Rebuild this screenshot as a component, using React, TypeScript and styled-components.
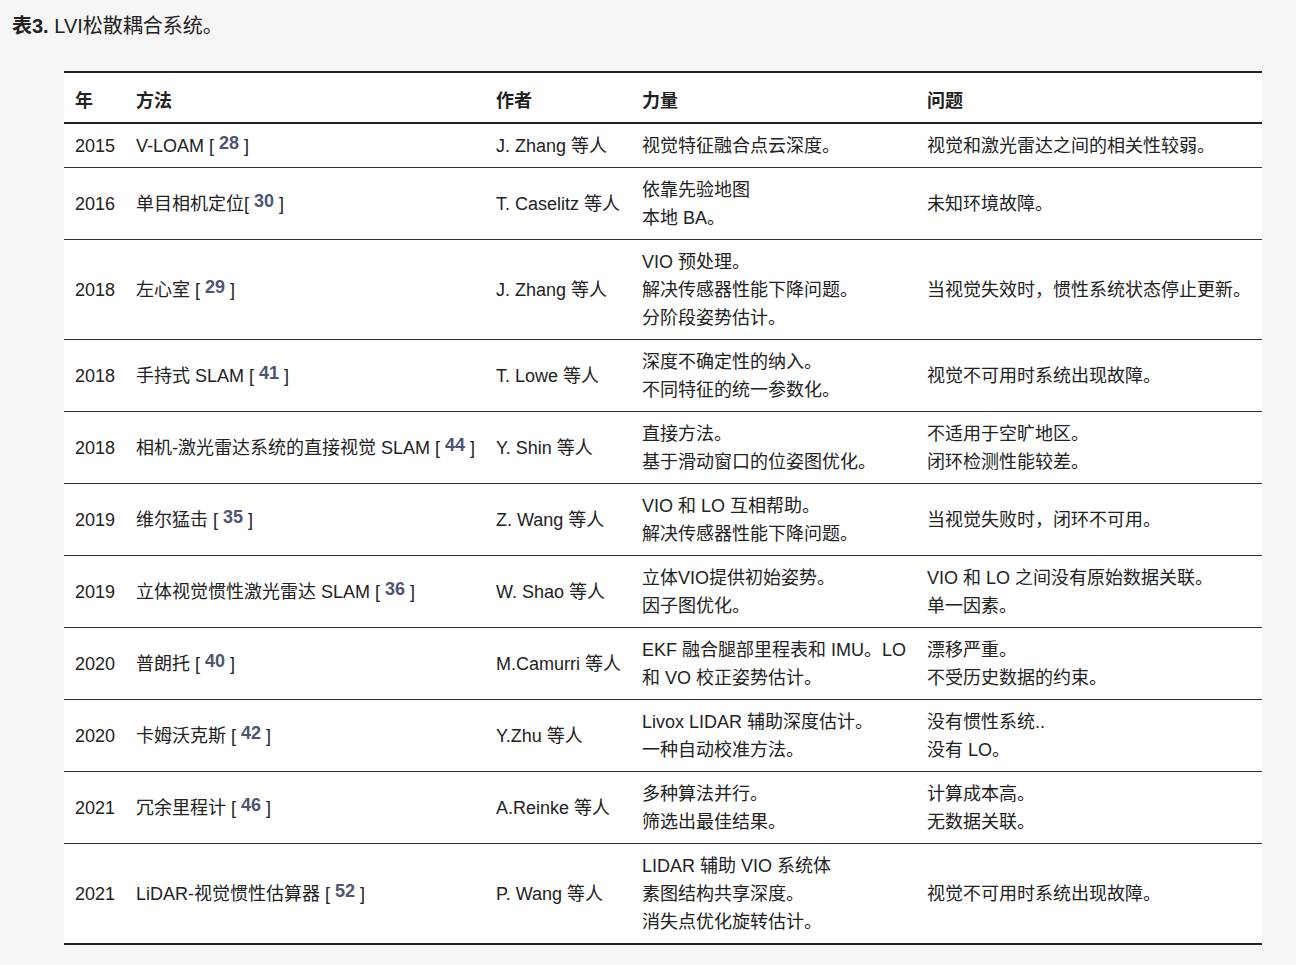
import React from "react";
import styled, { createGlobalStyle } from "styled-components";

const Global = createGlobalStyle`
  body {
    margin: 0;
    background: #f5f5f5;
    font-family: "Liberation Sans", "Noto Sans CJK SC", sans-serif;
    color: #222;
  }
`;

const Page = styled.div`
  padding: 12px 34px 16px 12px;
`;

const Caption = styled.div`
  font-size: 20px;
  line-height: 28px;
  margin-bottom: 31px;
  b {
    font-weight: 700;
  }
`;

const Table = styled.table`
  margin-left: 52px;
  width: 1198px;
  table-layout: fixed;
  border-collapse: collapse;
  background: #fff;
  border-top: 2px solid #222;
  border-bottom: 2px solid #222;
  font-size: 18px;
  line-height: 28px;
`;

const Th = styled.th`
  text-align: left;
  font-weight: 700;
  padding: 14px 0 7px 11px;
  border-bottom: 2px solid #222;
`;

const Td = styled.td`
  padding: 8px 0 7px 11px;
  vertical-align: middle;
`;

const Tr = styled.tr`
  & + & td {
    border-top: 1px solid #333;
  }
`;

const Ref = styled.span`
  font-weight: 700;
  color: #4d5573;
  position: relative;
  top: -3px;
`;

type Row = [string, string, string, string, string[], string[]];

const rows: Row[] = [
  ["2015", "V-LOAM ", "28", "J. Zhang 等人", ["视觉特征融合点云深度。"], ["视觉和激光雷达之间的相关性较弱。"]],
  ["2016", "单目相机定位", "30", "T. Caselitz 等人", ["依靠先验地图", "本地 BA。"], ["未知环境故障。"]],
  ["2018", "左心室 ", "29", "J. Zhang 等人", ["VIO 预处理。", "解决传感器性能下降问题。", "分阶段姿势估计。"], ["当视觉失效时，惯性系统状态停止更新。"]],
  ["2018", "手持式 SLAM ", "41", "T. Lowe 等人", ["深度不确定性的纳入。", "不同特征的统一参数化。"], ["视觉不可用时系统出现故障。"]],
  ["2018", "相机-激光雷达系统的直接视觉 SLAM ", "44", "Y. Shin 等人", ["直接方法。", "基于滑动窗口的位姿图优化。"], ["不适用于空旷地区。", "闭环检测性能较差。"]],
  ["2019", "维尔猛击 ", "35", "Z. Wang 等人", ["VIO 和 LO 互相帮助。", "解决传感器性能下降问题。"], ["当视觉失败时，闭环不可用。"]],
  ["2019", "立体视觉惯性激光雷达 SLAM ", "36", "W. Shao 等人", ["立体VIO提供初始姿势。", "因子图优化。"], ["VIO 和 LO 之间没有原始数据关联。", "单一因素。"]],
  ["2020", "普朗托 ", "40", "M.Camurri 等人", ["EKF 融合腿部里程表和 IMU。LO 和 VO 校正姿势估计。"], ["漂移严重。", "不受历史数据的约束。"]],
  ["2020", "卡姆沃克斯 ", "42", "Y.Zhu 等人", ["Livox LIDAR 辅助深度估计。", "一种自动校准方法。"], ["没有惯性系统..", "没有 LO。"]],
  ["2021", "冗余里程计 ", "46", "A.Reinke 等人", ["多种算法并行。", "筛选出最佳结果。"], ["计算成本高。", "无数据关联。"]],
  ["2021", "LiDAR-视觉惯性估算器 ", "52", "P. Wang 等人", ["LIDAR 辅助 VIO 系统体", "素图结构共享深度。", "消失点优化旋转估计。"], ["视觉不可用时系统出现故障。"]],
];

const Lines = ({ items }: { items: string[] }) => (
  <>
    {items.map((t, i) => (
      <div key={i}>{t}</div>
    ))}
  </>
);

export default function App() {
  return (
    <Page>
      <Global />
      <Caption>
        <b>表3.</b> LVI松散耦合系统。
      </Caption>
      <Table>
        <colgroup>
          <col style={{ width: 61 }} />
          <col style={{ width: 360 }} />
          <col style={{ width: 146 }} />
          <col style={{ width: 285 }} />
          <col style={{ width: 346 }} />
        </colgroup>
        <thead>
          <tr>
            <Th>年</Th>
            <Th>方法</Th>
            <Th>作者</Th>
            <Th>力量</Th>
            <Th>问题</Th>
          </tr>
        </thead>
        <tbody>
          {rows.map((r, i) => (
            <Tr key={i}>
              <Td>{r[0]}</Td>
              <Td>
                {r[1]}[ <Ref>{r[2]}</Ref> ]
              </Td>
              <Td>{r[3]}</Td>
              <Td>
                <Lines items={r[4]} />
              </Td>
              <Td>
                <Lines items={r[5]} />
              </Td>
            </Tr>
          ))}
        </tbody>
      </Table>
    </Page>
  );
}
